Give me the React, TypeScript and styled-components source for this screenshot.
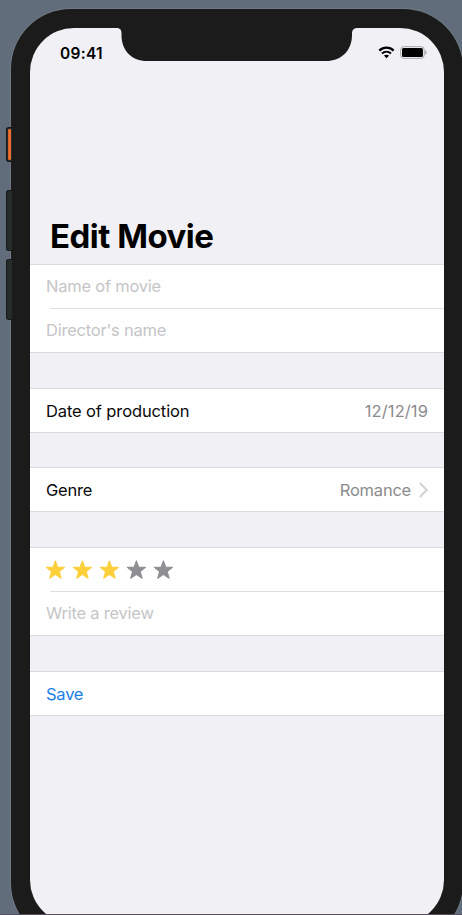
import React from "react";
import styled, { createGlobalStyle } from "styled-components";

const GlobalStyle = createGlobalStyle`
  * { box-sizing: border-box; }
  html, body { margin: 0; padding: 0; overflow: hidden; }
  body { font-family: Inter, "Liberation Sans", sans-serif; color: #000; }
`;

const Desktop = styled.main`
  height: 915px;
  overflow: hidden;
  padding: 9px 0 0 5px;
  display: flex;
  align-items: flex-start;
  background: #616d7b;
  border-bottom: 1px solid #54505f;
`;

const Buttons = styled.div`
  width: 6px;
  flex: none;
  padding: 118px 0 0 1px;
  position: relative;
  z-index: 1;
`;

const SideButton = styled.div<{ $height: number; $gap: number }>`
  width: 6px;
  height: ${(p) => p.$height}px;
  margin-bottom: ${(p) => p.$gap}px;
  background: #272b2b;
  border: 1px solid #15191b;
  border-right: 0;
  border-radius: 3px 0 0 3px;
`;

const MuteSwitch = styled(SideButton)`
  padding: 1px;
  &::before {
    content: "";
    display: block;
    width: 3px;
    height: 100%;
    border-radius: 1px;
    background: linear-gradient(90deg, #c4602b, #f26d2b 50%);
  }
`;

const Device = styled.div`
  width: 452px;
  height: 934px;
  flex: none;
  padding: 19px;
  border-radius: 60px;
  background: #1b1b1b;
  box-shadow: 0 0 0 1px rgba(125, 132, 138, 0.55);
`;

const Screen = styled.div`
  width: 414px;
  height: 896px;
  overflow: hidden;
  border-radius: 44px;
  background: #f0f0f5;
`;

const StatusBar = styled.header`
  height: 44px;
  display: flex;
  align-items: flex-start;
`;

const Clock = styled.time`
  width: 86px;
  padding: 16px 0 0 30px;
  font-size: 15.5px;
  line-height: 19px;
  font-weight: 600;
  letter-spacing: 0.3px;
  white-space: nowrap;
`;

const Indicators = styled.div`
  flex: 1;
  display: flex;
  align-items: center;
  gap: 5px;
  padding: 18px 0 0 20px;
`;

const Title = styled.h1`
  margin: 0;
  height: 192px;
  padding: 144px 20px 0;
  font-size: 33px;
  line-height: 40px;
  font-weight: 700;
  letter-spacing: -0.5px;
`;

const Group = styled.section<{ $gap?: number }>`
  margin-bottom: ${(p) => p.$gap ?? 35}px;
  border: solid #dbdbde;
  border-width: 1px 0;
  background: #fff;
`;

const Row = styled.div<{ $raised?: boolean }>`
  height: 43px;
  padding: 0 16px ${(p) => (p.$raised ? 2 : 0)}px;
  display: flex;
  align-items: center;
  justify-content: space-between;
  font-size: 16.5px;
  line-height: 20px;
`;

const Divider = styled.hr`
  height: 1px;
  margin: 0 0 0 20px;
  border: 0;
  background: #dedee0;
`;

const tones = {
  label: "#0a0a0a",
  hint: "#c5c5c7",
  value: "#8b8b8e",
  link: "#1a7ee6",
};

const Text = styled.span<{ $tone?: keyof typeof tones; $track?: number }>`
  color: ${(p) => tones[p.$tone ?? "label"]};
  letter-spacing: ${(p) => p.$track ?? -0.23}px;
  white-space: nowrap;
`;

const Trailing = styled.div`
  display: flex;
  align-items: center;
  gap: 8px;
`;

const Stars = styled.div`
  display: flex;
  gap: 7px;
  margin-left: -1px;
`;

const Notch = () => (
  <svg width="242" height="33" viewBox="0 0 242 33">
    <path
      d="M0 0H242C238 0 236 1.5 236 5.5V7C236 23 225 33 210 33H31C16 33 5.5 23 5.5 7V5.5C5.5 1.5 4 0 0 0Z"
      fill="#1b1b1b"
    />
  </svg>
);

const Wifi = () => (
  <svg width="17" height="13" viewBox="0 0 17 13" fill="none" stroke="#000">
    <path d="M1.3 4.6C5.4.7 11.6.7 15.7 4.6" strokeWidth="2.2" />
    <path d="M4 7.5C6.6 5.1 10.4 5.1 13 7.5" strokeWidth="2" />
    <path d="M8.5 12.2L5.9 9.6C7.3 8.4 9.7 8.4 11.1 9.6Z" fill="#000" stroke="none" />
  </svg>
);

const Battery = () => (
  <svg width="27" height="13" viewBox="0 0 27 13">
    <rect x="0.7" y="0.7" width="23.5" height="11.6" rx="3" fill="#f4f4f6" stroke="#a5a5a8" />
    <rect x="2" y="1.9" width="20.9" height="9.2" rx="1.6" fill="#000" />
    <path d="M25.2 4.5C27.2 5.2 27.2 7.8 25.2 8.5Z" fill="#a5a5a8" />
  </svg>
);

const Star = ({ filled }: { filled: boolean }) => (
  <svg width="20" height="20" viewBox="-0.4 0 20 20">
    <path
      d="M10 .9L12.25 7.2L19 7.35L13.75 11.5L15.7 18.2L10 14.4L4.3 18.2L6.25 11.5L1 7.35L7.75 7.2Z"
      fill={filled ? "#fdd03b" : "#8e8e93"}
      stroke={filled ? "#fdd03b" : "#8e8e93"}
      strokeWidth="1.1"
      strokeLinejoin="round"
    />
  </svg>
);

const Chevron = () => (
  <svg width="9" height="16" viewBox="0 0 9 16" fill="none">
    <path d="M.8 1L7.8 8L.8 15" stroke="#d2d2d5" strokeWidth="2" />
  </svg>
);

export default function App() {
  return (
    <>
      <GlobalStyle />
      <Desktop>
        <Buttons>
          <MuteSwitch $height={35} $gap={28} />
          <SideButton $height={61} $gap={8} />
          <SideButton $height={61} $gap={0} />
        </Buttons>
        <Device>
          <Screen>
            <StatusBar>
              <Clock>09:41</Clock>
              <Notch />
              <Indicators>
                <Wifi />
                <Battery />
              </Indicators>
            </StatusBar>
            <Title>Edit Movie</Title>
            <Group>
              <Row $raised><Text $tone="hint">Name of movie</Text></Row>
              <Divider />
              <Row $raised><Text $tone="hint">Director's name</Text></Row>
            </Group>
            <Group $gap={34}>
              <Row>
                <Text $track={-0.12}>Date of production</Text>
                <Text $tone="value" $track={0.1}>12/12/19</Text>
              </Row>
            </Group>
            <Group>
              <Row>
                <Text>Genre</Text>
                <Trailing>
                  <Text $tone="value">Romance</Text>
                  <Chevron />
                </Trailing>
              </Row>
            </Group>
            <Group>
              <Row>
                <Stars>
                  {[1, 2, 3, 4, 5].map((n) => (
                    <Star key={n} filled={n <= 3} />
                  ))}
                </Stars>
              </Row>
              <Divider />
              <Row $raised><Text $tone="hint">Write a review</Text></Row>
            </Group>
            <Group>
              <Row><Text $tone="link">Save</Text></Row>
            </Group>
          </Screen>
        </Device>
      </Desktop>
    </>
  );
}
